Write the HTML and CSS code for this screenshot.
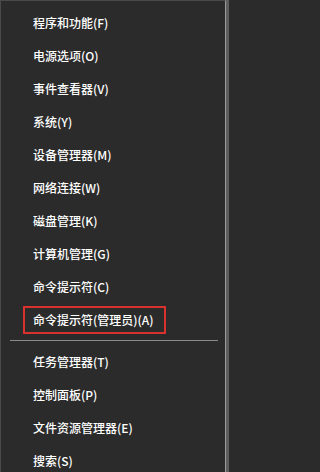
FILE: index.html
```html
<!DOCTYPE html>
<html lang="zh-CN">
<head>
<meta charset="utf-8">
<link rel="stylesheet" href="styles.css">
</head>
<body>
<div class="shell">
  <div class="frame">
    <ul class="menu">
      <li class="item">程序和功能(F)</li>
      <li class="item">电源选项(O)</li>
      <li class="item">事件查看器(V)</li>
      <li class="item">系统(Y)</li>
      <li class="item">设备管理器(M)</li>
      <li class="item">网络连接(W)</li>
      <li class="item">磁盘管理(K)</li>
      <li class="item">计算机管理(G)</li>
      <li class="item">命令提示符(C)</li>
      <li class="item"><span class="mark">命令提示符(管理员)(A)</span></li>
      <li class="sep"></li>
      <li class="item">任务管理器(T)</li>
      <li class="item">控制面板(P)</li>
      <li class="item">文件资源管理器(E)</li>
      <li class="item">搜索(S)</li>
    </ul>
  </div>
</div>
</body>
</html>
```

FILE: styles.css
```css
html, body {
  margin: 0;
  padding: 0;
  background: #2b2b2b;
}
body {
  height: 472px;
  overflow: hidden;
}
.shell {
  width: 229px;
  height: 472px;
  background: #5e5e5e;
}
.frame {
  width: 226px;
  height: 472px;
  box-sizing: border-box;
  background: #2b2b2b;
  border-top: 1px solid #4a4a4a;
  border-left: 1px solid #4a4a4a;
  border-right: 1px solid #9a9a9a;
}
.menu {
  list-style: none;
  margin: 0;
  padding: 5px 0 0 0;
  font-family: "Noto Sans CJK SC", "Microsoft YaHei", sans-serif;
  font-size: 12px;
  font-weight: 500;
  color: #ffffff;
}
.item {
  height: 33px;
  display: flex;
  align-items: center;
  padding-left: 32px;
  white-space: nowrap;
}
.mark {
  display: inline-block;
  margin-left: -10px;
  padding: 0 10px 0 8px;
  line-height: 24px;
  border: 2px solid #d9322e;
}
.sep {
  height: 1px;
  margin: 4px 7px 4px 9px;
  background: #8a8a8a;
}
```
